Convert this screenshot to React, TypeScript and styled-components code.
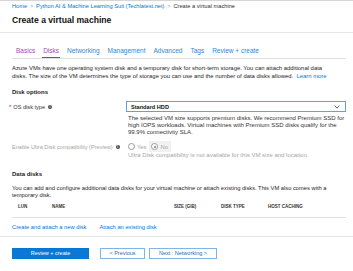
import React from "react";
import styled, { createGlobalStyle } from "styled-components";

const Global = createGlobalStyle`
  html, body { margin: 0; padding: 0; background: #fff; }
  body { font-family: "Liberation Sans", Arial, sans-serif; color: #323130; }
  * { box-sizing: border-box; }
`;

const Page = styled.div`
  width: 353px;
  height: 271px;
  overflow: hidden;
  background: #fff;
  box-shadow: inset 0 1px 0 #d6d6d6;
`;

const Header = styled.header`
  padding: 2px 12px 6px;
  border-bottom: 1px solid #e6e6e6;
`;

const Breadcrumb = styled.nav`
  display: flex;
  align-items: center;
  height: 8px;
  font-size: 5.7px;
  line-height: 8px;
  white-space: nowrap;
`;

const Crumb = styled.span<{ $current?: boolean }>`
  color: ${(p) => (p.$current ? "#323130" : "#0078d4")};
`;

const CrumbSep = styled.span`
  color: #8a8886;
  margin: 0 3px;
  font-size: 5px;
`;

const Title = styled.h1`
  margin: 4px 0 0;
  font-size: 8.6px;
  line-height: 12px;
  font-weight: 600;
  color: #111;
`;

const Content = styled.main`
  padding: 0 7px 5px 12px;
  border-bottom: 1px solid #e6e6e6;
`;

const Tabs = styled.div`
  display: flex;
  margin-top: 14px;
  border-bottom: 1px solid #e1e1e1;
`;

const Tab = styled.span<{ $state: "visited" | "active" | "normal" }>`
  position: relative;
  padding: 0 4px 3px;
  font-size: 6.5px;
  line-height: 8px;
  white-space: nowrap;
  color: ${(p) => (p.$state === "normal" ? "#2b88d8" : "#a14bb8")};
  &::after {
    content: "";
    display: ${(p) => (p.$state === "active" ? "block" : "none")};
    position: absolute;
    left: 3px;
    right: 3px;
    bottom: 0;
    height: 1.5px;
    background: #8b3cab;
  }
`;

const Para = styled.p<{ $mt?: number; $lh?: number; $fs?: number }>`
  margin: ${(p) => p.$mt ?? 0}px 0 0;
  font-size: ${(p) => p.$fs ?? 5.75}px;
  line-height: ${(p) => p.$lh ?? 8}px;
  color: #252525;
  white-space: nowrap;
`;

const Link = styled.a`
  color: #0078d4;
  text-decoration: none;
`;

const SectionTitle = styled.h2<{ $mt: number }>`
  margin: ${(p) => p.$mt}px 0 0;
  font-size: 6px;
  line-height: 8px;
  font-weight: 700;
  color: #222;
`;

const FieldRow = styled.div<{ $mt: number }>`
  display: grid;
  grid-template-columns: 114px 220px;
  margin-top: ${(p) => p.$mt}px;
`;

const Label = styled.div<{ $muted?: boolean }>`
  display: flex;
  align-items: center;
  gap: 2px;
  height: 11px;
  font-size: 5.6px;
  white-space: nowrap;
  color: ${(p) => (p.$muted ? "#a6a6a6" : "#333")};
`;

const Required = styled.span`
  color: #e81123;
  font-size: 6px;
  margin-left: -3px;
  margin-right: 0;
`;

const Info = styled.span`
  display: inline-flex;
  align-items: center;
  justify-content: center;
  width: 4px;
  height: 4px;
  border-radius: 50%;
  background: #444;
  color: #fff;
  font-size: 3.5px;
  font-weight: 700;
  line-height: 4px;
  margin-left: 1px;
`;

const FieldBody = styled.div``;

const Select = styled.div`
  display: flex;
  align-items: center;
  justify-content: space-between;
  height: 11px;
  padding: 0 5px 0 4px;
  border: 1px solid #5aa2e0;
  font-size: 5.6px;
  font-weight: 700;
  color: #111;
`;

const Help = styled.div<{ $muted?: boolean; $mt?: number }>`
  margin-top: ${(p) => p.$mt ?? 2.5}px;
  font-size: 6px;
  line-height: 7px;
  white-space: nowrap;
  color: ${(p) => (p.$muted ? "#a6a6a6" : "#333")};
  padding-left: 2px;
`;

const Radios = styled.div`
  display: flex;
  align-items: center;
  height: 11px;
`;

const Radio = styled.span<{ $checked?: boolean }>`
  display: inline-flex;
  align-items: center;
  gap: 2px;
  height: 11px;
  padding: 0 3px 0 2px;
  background: ${(p) => (p.$checked ? "#f1f1f1" : "transparent")};
  font-size: 5.8px;
  color: #a6a6a6;
`;

const Circle = styled.span<{ $checked?: boolean }>`
  position: relative;
  width: 7px;
  height: 7px;
  border-radius: 50%;
  border: 0.8px solid #9a9a9a;
  background: #fff;
  &::after {
    content: "";
    display: ${(p) => (p.$checked ? "block" : "none")};
    position: absolute;
    left: 1.6px;
    top: 1.6px;
    width: 2.2px;
    height: 2.2px;
    border-radius: 50%;
    background: #777;
  }
`;

const TableHead = styled.div`
  display: grid;
  grid-template-columns: 34px 122px 47px 47px 1fr;
  padding: 4px 0 7px 6px;
  border-bottom: 1px solid #e1e1e1;
  margin-top: 0.5px;
`;

const Th = styled.span`
  font-size: 4.5px;
  line-height: 6px;
  font-weight: 700;
  color: #333;
  white-space: nowrap;
`;

const Actions = styled.div`
  display: flex;
  gap: 13px;
  margin-top: 5px;
  font-size: 5.75px;
  line-height: 8px;
`;

const Footer = styled.footer`
  display: flex;
  padding: 11px 12px 0;
`;

const Button = styled.button<{ $primary?: boolean; $w: number; $ml?: number }>`
  width: ${(p) => p.$w}px;
  height: 11px;
  margin-left: ${(p) => p.$ml ?? 0}px;
  padding: 0;
  font-family: inherit;
  font-size: 5.5px;
  line-height: 9px;
  border: 1px solid ${(p) => (p.$primary ? "#0078d4" : "#7fb5e6")};
  background: ${(p) => (p.$primary ? "#0b78d6" : "#fff")};
  color: ${(p) => (p.$primary ? "#fff" : "#2b6cb0")};
`;

const Chevron = () => (
  <svg width="6" height="4" viewBox="0 0 6 4">
    <path d="M0.6 0.8 L3 3.1 L5.4 0.8" fill="none" stroke="#333" strokeWidth="0.8" />
  </svg>
);

export default function App() {
  return (
    <Page>
      <Global />
      <Header>
        <Breadcrumb>
          <Crumb>Home</Crumb>
          <CrumbSep>&gt;</CrumbSep>
          <Crumb>Python AI &amp; Machine Learning Suit (Techlatest.net)</Crumb>
          <CrumbSep>&gt;</CrumbSep>
          <Crumb $current>Create a virtual machine</Crumb>
        </Breadcrumb>
        <Title>Create a virtual machine</Title>
      </Header>
      <Content>
        <Tabs>
          <Tab $state="visited">Basics</Tab>
          <Tab $state="active">Disks</Tab>
          <Tab $state="normal">Networking</Tab>
          <Tab $state="normal">Management</Tab>
          <Tab $state="normal">Advanced</Tab>
          <Tab $state="normal">Tags</Tab>
          <Tab $state="normal">Review + create</Tab>
        </Tabs>
        <Para $mt={5} $fs={5.9}>
          Azure VMs have one operating system disk and a temporary disk for short-term storage. You can attach additional data
          <br />
          disks. The size of the VM determines the type of storage you can use and the number of data disks allowed.{"\u00a0 "}
          <Link>Learn more</Link>
        </Para>
        <SectionTitle $mt={8}>Disk options</SectionTitle>
        <FieldRow $mt={5}>
          <Label>
            <Required>*</Required>OS disk type <Info>i</Info>
          </Label>
          <FieldBody>
            <Select>
              <span>Standard HDD</span>
              <Chevron />
            </Select>
            <Help>
              The selected VM size supports premium disks. We recommend Premium SSD for
              <br />
              high IOPS workloads. Virtual machines with Premium SSD disks qualify for the
              <br />
              99.9% connectivity SLA.
            </Help>
          </FieldBody>
        </FieldRow>
        <FieldRow $mt={5.5}>
          <Label $muted>
            Enable Ultra Disk compatibility (Preview) <Info>i</Info>
          </Label>
          <FieldBody>
            <Radios>
              <Radio>
                <Circle />
                Yes
              </Radio>
              <Radio $checked>
                <Circle $checked />
                No
              </Radio>
            </Radios>
            <Help $muted $mt={0}>
              Ultra Disk compatibility is not available for this VM size and location.
            </Help>
          </FieldBody>
        </FieldRow>
        <SectionTitle $mt={11}>Data disks</SectionTitle>
        <Para $mt={6.5} $lh={7.5}>
          You can add and configure additional data disks for your virtual machine or attach existing disks. This VM also comes with a
          <br />
          temporary disk.
        </Para>
        <TableHead>
          <Th>LUN</Th>
          <Th>NAME</Th>
          <Th>SIZE (GIB)</Th>
          <Th>DISK TYPE</Th>
          <Th>HOST CACHING</Th>
        </TableHead>
        <Actions>
          <Link>Create and attach a new disk</Link>
          <Link>Attach an existing disk</Link>
        </Actions>
      </Content>
      <Footer>
        <Button $primary $w={77}>Review + create</Button>
        <Button $w={45} $ml={11}>&lt; Previous</Button>
        <Button $w={68} $ml={4}>Next : Networking &gt;</Button>
      </Footer>
    </Page>
  );
}
